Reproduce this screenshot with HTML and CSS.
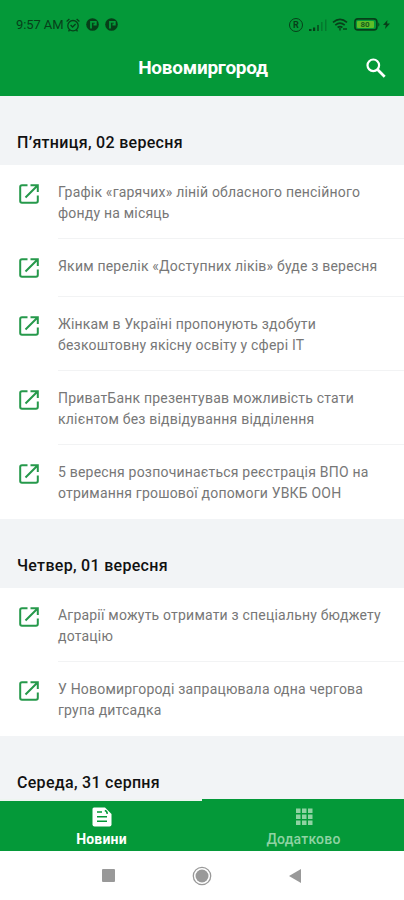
FILE: index.html
```html
<!DOCTYPE html>
<html lang="uk">
<head>
<meta charset="UTF-8">
<meta name="viewport" content="width=device-width, initial-scale=1.0">
<title>Новомиргород</title>
<link rel="stylesheet" href="styles.css">
</head>
<body>

<!-- Shared link icon -->
<svg class="sprite" width="0" height="0">
  <symbol id="openIcon" viewBox="0 0 20 20">
    <path d="M8.5 1.2H3Q1.2 1.2 1.2 3V17Q1.2 18.8 3 18.8H17Q18.8 18.8 18.8 17V11.5M11.5 1.2H18.8V8M18.3 1.7L6.5 13.5" fill="none" stroke="currentColor" stroke-width="2"/>
  </symbol>
</svg>

<div class="app">
  <header class="header">
    <div class="statusBar">
      <span class="time">9:57 AM</span>
      <svg class="alarm" width="14" height="14" viewBox="0 0 14 14" fill="none" stroke="currentColor" stroke-width="1.3">
        <circle cx="7" cy="7.7" r="5.2"/>
        <path d="M.6 3.4L3.4 1M13.4 3.4L10.6 1M4.6 7l2 2 3-3M3.5 12l-1 1.4M10.5 12l1 1.4"/>
      </svg>
      <svg class="notice" width="13" height="13" viewBox="0 0 13 13">
        <circle cx="6.5" cy="6.5" r="6.3" fill="currentColor"/>
        <path d="M5 10.5V3.8H9.8V6.5H7.5" fill="none" stroke="#049939" stroke-width="1.8"/>
      </svg>
      <svg class="notice" width="13" height="13" viewBox="0 0 13 13">
        <circle cx="6.5" cy="6.5" r="6.3" fill="currentColor"/>
        <path d="M5 10.5V3.8H9.8V6.5H7.5" fill="none" stroke="#049939" stroke-width="1.8"/>
      </svg>
      <span class="spacer"></span>
      <span class="registered">R</span>
      <svg class="signal" width="18" height="12" viewBox="0 0 18 12" fill="currentColor">
        <path d="M0 10h2.5v2H0zM4 8.5h2.2V12H4z"/>
        <path d="M8 6h2v6H8z" opacity=".7"/>
        <path d="M12 3h1.6v9H12zM16 .5h1.5V12H16z" opacity=".35"/>
      </svg>
      <svg class="wifi" width="16" height="13" viewBox="0 0 16 13" fill="none" stroke="currentColor" stroke-width="1.7">
        <path d="M1 4.3Q8-1.5 15 4.3M3.3 7.1Q8 3.3 12.7 7.1M5.6 9.5Q8 7.8 10.4 9.5"/>
        <path d="M8 10v2.5M12 10v2M14 10v2" stroke-width="1.4"/>
      </svg>
      <svg class="battery" width="27" height="13" viewBox="0 0 27 13">
        <rect x=".9" y=".9" width="22" height="11" rx="3" fill="none" stroke="currentColor" stroke-width="1.6"/>
        <rect x="3" y="3" width="17" height="7" rx="1" fill="#60bd29"/>
        <path d="M24.3 4.2Q26.5 6.5 24.3 8.8z" fill="currentColor"/>
        <text x="11" y="9.3" text-anchor="middle">80</text>
      </svg>
      <svg class="bolt" width="7" height="9" viewBox="0 0 7 9" fill="currentColor">
        <path d="M4.5 0L0 5h2.8L2 9l5-5.5H4z"/>
      </svg>
    </div>
    <div class="titleBar">
      <h1>Новомиргород</h1>
      <button class="searchBtn" aria-label="Пошук">
        <svg width="20" height="20" viewBox="0 0 20 20" fill="none" stroke="currentColor" stroke-width="2.2">
          <circle cx="7.3" cy="7.3" r="5.8"/>
          <path d="M11.5 11.5L18.7 18.7" stroke-width="2.7"/>
        </svg>
      </button>
    </div>
  </header>

  <main class="news">
    <h2>П’ятниця, 02 вересня</h2>
    <ul>
      <li><svg class="icon"><use href="#openIcon"/></svg><p>Графік «гарячих» ліній обласного пенсійного<br>фонду на місяць</p></li>
      <li><svg class="icon"><use href="#openIcon"/></svg><p>Яким перелік «Доступних ліків» буде з вересня</p></li>
      <li><svg class="icon"><use href="#openIcon"/></svg><p>Жінкам в Україні пропонують здобути<br>безкоштовну якісну освіту у сфері ІТ</p></li>
      <li><svg class="icon"><use href="#openIcon"/></svg><p>ПриватБанк презентував можливість стати<br>клієнтом без відвідування відділення</p></li>
      <li><svg class="icon"><use href="#openIcon"/></svg><p>5 вересня розпочинається реєстрація ВПО на<br>отримання грошової допомоги УВКБ ООН</p></li>
    </ul>
    <h2>Четвер, 01 вересня</h2>
    <ul>
      <li><svg class="icon"><use href="#openIcon"/></svg><p>Аграрії можуть отримати з спеціальну бюджету<br>дотацію</p></li>
      <li><svg class="icon"><use href="#openIcon"/></svg><p>У Новомиргороді запрацювала одна чергова<br>група дитсадка</p></li>
    </ul>
    <h2>Середа, 31 серпня</h2>
  </main>

  <nav class="tabs">
    <a class="tab active">
      <svg width="20" height="20" viewBox="0 0 20 20">
        <path d="M2 .5H13L19.5 7V17.5Q19.5 19.5 17.5 19.5H2.5Q.5 19.5 .5 17.5V2Q.5 .5 2 .5z" fill="currentColor"/>
        <path d="M5 5h5M5 9.7h10M5 14.2h10M12.8 3.5Q15 4 15.3 6.8" fill="none" stroke="#049939" stroke-width="1.6"/>
      </svg>
      <span>Новини</span>
    </a>
    <a class="tab">
      <svg width="20" height="20" viewBox="0 0 20 20" fill="currentColor">
        <path d="M2 1.5h4.5v4.5H2zM8 1.5h4.5v4.5H8zM14 1.5h4.5v4.5H14zM2 7.5h4.5v4.5H2zM8 7.5h4.5v4.5H8zM14 7.5h4.5v4.5H14zM2 13.5h4.5v4.5H2zM8 13.5h4.5v4.5H8zM14 13.5h4.5v4.5H14z"/>
      </svg>
      <span>Додатково</span>
    </a>
  </nav>

  <div class="systemNav">
    <svg width="13" height="13" viewBox="0 0 13 13"><rect width="13" height="13" rx="1" fill="#999"/></svg>
    <svg width="20" height="20" viewBox="0 0 20 20"><circle cx="10" cy="10" r="8.7" fill="none" stroke="#999" stroke-width="1.3"/><circle cx="10" cy="10" r="6.5" fill="#999"/></svg>
    <svg width="12" height="14" viewBox="0 0 12 14"><path d="M0 7L12 0V14z" fill="#999"/></svg>
  </div>
</div>

</body>
</html>
```
FILE: styles.css
```css
* {
  box-sizing: border-box;
}
body {
  margin: 0;
  font-family: Roboto, "Liberation Sans", sans-serif;
  background-color: #fff;
}
h1, h2, p, ul {
  margin: 0;
  padding: 0;
}
.sprite {
  display: none;
}
.app {
  display: flex;
  flex-direction: column;
  height: 900px;
  overflow: hidden;
}
.header {
  height: 96px;
  flex: none;
  background-color: #049939;
}
.statusBar {
  display: flex;
  align-items: center;
  height: 49px;
  padding: 0 14px 0 16px;
  color: #073f19;
}
.time {
  font-size: 13px;
  letter-spacing: -0.1px;
  width: 50px;
  white-space: nowrap;
}
.notice {
  margin-left: 6px;
}
.spacer {
  flex: 1;
}
.registered {
  width: 14px;
  height: 14px;
  border: 1.5px solid;
  border-radius: 50%;
  font-size: 9px;
  font-weight: bold;
  line-height: 12px;
  text-align: center;
}
.signal {
  margin-left: 6px;
}
.wifi {
  margin-left: 5px;
}
.battery {
  margin-left: 6px;
}
.battery text {
  font-size: 8px;
  font-weight: bold;
  fill: #175c1d;
}
.bolt {
  margin-left: 2px;
}
.titleBar {
  display: grid;
  grid-template-columns: 48px 1fr 48px;
  align-items: center;
  height: 37px;
  color: #fff;
}
.titleBar h1 {
  grid-column: 2;
  padding-left: 2px;
  text-align: center;
  font-size: 19px;
  font-weight: bold;
  letter-spacing: -0.25px;
}
.searchBtn {
  display: flex;
  padding: 0 0 0 10px;
  border: none;
  background: none;
  color: #fff;
}
.news {
  flex: 1;
  min-height: 0;
  overflow: hidden;
  background-color: #f2f4f6;
}
.news h2 {
  height: 69px;
  padding: 36px 17px 0;
  font-size: 16px;
  font-weight: 500;
  line-height: 22px;
  letter-spacing: 0.3px;
  color: #111;
  white-space: nowrap;
}
.news ul {
  list-style: none;
  background-color: #fff;
}
.news li {
  display: flex;
  align-items: flex-start;
  min-height: 58px;
}
.icon {
  width: 20px;
  height: 20px;
  flex: none;
  margin: 19px 19px 0;
  color: #26994b;
}
.news p {
  flex: 1;
  align-self: stretch;
  padding: 17px 0 14px;
  border-bottom: 1px solid #f2f3f4;
  font-size: 14px;
  line-height: 21px;
  letter-spacing: 0.2px;
  color: #777;
  white-space: nowrap;
}
.news li:last-child p {
  border-color: transparent;
}
.tabs {
  display: flex;
  flex: none;
  height: 52px;
  background-color: #049939;
}
.tab {
  display: flex;
  flex: 1;
  flex-direction: column;
  align-items: center;
  padding: 8px 0 0 1px;
  color: #8fd3a3;
  font-size: 14px;
  font-weight: 500;
  line-height: 16px;
  letter-spacing: 0.2px;
}
.tab span {
  margin-top: 4px;
}
.tab.active {
  padding-top: 6px;
  border-top: 2px solid #eef5f0;
  color: #fff;
  font-weight: bold;
}
.systemNav {
  display: flex;
  flex: none;
  align-items: center;
  justify-content: space-between;
  height: 49px;
  padding: 0 103px 0 102px;
}
```
